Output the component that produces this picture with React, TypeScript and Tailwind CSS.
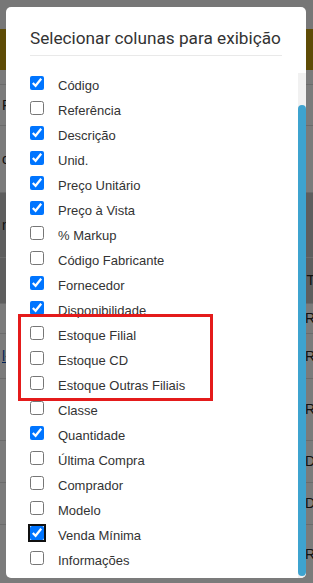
import React from 'react';

const columns: { label: string; checked: boolean; focus?: boolean }[] = [
  { label: 'Código', checked: true },
  { label: 'Referência', checked: false },
  { label: 'Descrição', checked: true },
  { label: 'Unid.', checked: true },
  { label: 'Preço Unitário', checked: true },
  { label: 'Preço à Vista', checked: true },
  { label: '% Markup', checked: false },
  { label: 'Código Fabricante', checked: false },
  { label: 'Fornecedor', checked: true },
  { label: 'Disponibilidade', checked: true },
  { label: 'Estoque Filial', checked: false },
  { label: 'Estoque CD', checked: false },
  { label: 'Estoque Outras Filiais', checked: false },
  { label: 'Classe', checked: false },
  { label: 'Quantidade', checked: true },
  { label: 'Última Compra', checked: false },
  { label: 'Comprador', checked: false },
  { label: 'Modelo', checked: false },
  { label: 'Venda Mínima', checked: true, focus: true },
  { label: 'Informações', checked: false },
];

const bgRows = [
  { h: 'h-[41px]', left: 'P', right: '', dark: false },
  { h: 'h-[67px]', left: 'oc', right: '', dark: false },
  { h: 'h-[65px]', left: 'nc', right: '', dark: true },
  { h: 'h-[46px]', left: '', right: 'T', dark: true },
  { h: 'h-[30px]', left: '', right: 'R', dark: false },
  { h: 'h-[45px]', left: 'l-', right: 'R', dark: false, link: true },
  { h: 'h-[62px]', left: '', right: 'R', dark: false },
  { h: 'h-[42px]', left: '', right: 'D', dark: false },
  { h: 'h-[42px]', left: '', right: 'D', dark: false },
  { h: 'h-[60px]', left: '', right: 'R', dark: false },
];

export default function App() {
  const [cols, setCols] = React.useState(columns);

  const toggle = (i: number) => {
    setCols(prev => prev.map((c, j) => (j === i ? { ...c, checked: !c.checked } : c)));
  };

  return (
    <div className="relative h-[583px] w-[313px] overflow-hidden bg-white font-['Liberation_Sans',Arial,sans-serif]">
      {/* page behind the modal */}
      <div className="flex flex-col">
        <div className="h-[29px] bg-[#eeeeee]" />
        <div className="h-[41px] bg-[#bc980c]" />
        <div className="h-[14px] bg-[#f4f4f4]" />
        {bgRows.map((r, i) => (
          <div
            key={i}
            className={`flex items-center justify-between border-t border-[#d6d6d6] ${r.h} ${r.dark ? 'bg-[#bdbdbd]' : 'bg-[#f6f6f6]'}`}
          >
            <span className={`pl-[2px] text-[14px] ${r.link ? 'text-[#0645ad] underline' : 'text-[#222]'}`}>{r.left}</span>
            <span className="mr-[-2px] text-[14px] text-[#222]">{r.right}</span>
          </div>
        ))}
      </div>
      <div className="absolute inset-0 bg-black/50" />

      {/* modal */}
      <div className="absolute left-[6px] top-[7px] bottom-[5px] flex w-[300px] flex-col overflow-hidden rounded-[5px] bg-white">
        <div className="px-6 pt-[20px]">
          <h2 className="whitespace-nowrap border-b border-[#e9e9e9] pb-[6px] font-['Roboto',sans-serif] text-[17.2px] leading-[22px] text-[#333]">
            Selecionar colunas para exibição
          </h2>
        </div>
        <div className="mt-[17px] flex min-h-0 flex-1">
          <ul className="flex-1 pl-6">
            {cols.map((c, i) => (
              <li key={c.label} className="flex h-[25px] items-center">
                <input
                  type="checkbox"
                  checked={c.checked}
                  onChange={() => toggle(i)}
                  className={`m-0 mb-[5px] h-[14px] w-[14px] accent-[#0075ff] ${c.focus ? 'rounded-[3px] outline-2 outline-offset-0 outline-[#101010]' : ''}`}
                />
                <span className="ml-[14px] text-[13px] text-[#333]">{c.label}</span>
              </li>
            ))}
          </ul>
          <div className="flex w-[8px] flex-col bg-[#f1f1f1]">
            <div className="h-[32px]" />
            <div className="mb-[2px] flex-1 rounded-full bg-[#3ea3cf]" />
          </div>
        </div>
      </div>

      {/* highlight annotation */}
      <div className="absolute left-[18px] top-[314px] h-[87px] w-[195px] border-[3px] border-[#e41b1b]" />
    </div>
  );
}
